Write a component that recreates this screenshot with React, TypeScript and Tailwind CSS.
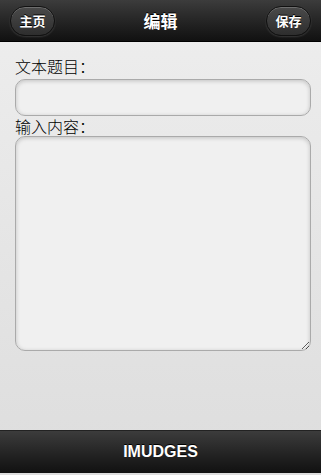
import React from "react"

function HeaderButton({ label }: { label: string }) {
  return (
    <button className="h-[30px] w-[45px] rounded-full border border-[#111] bg-gradient-to-b from-[#4a4a4a] to-[#2e2e2e] text-[13px] font-bold text-white shadow-[inset_0_1px_0_rgba(255,255,255,0.2),0_1px_2px_rgba(255,255,255,0.15)] [text-shadow:0_-1px_0_#000]">
      {label}
    </button>
  )
}

export default function App() {
  return (
    <div className="flex h-[475px] w-[321px] flex-col bg-gradient-to-b from-[#eeeeee] to-[#dddddd] font-['Noto_Sans_CJK_SC',sans-serif]">
      <header className="flex h-[42px] shrink-0 items-center justify-between border-b border-black bg-gradient-to-b from-[#3c3c3c] to-[#111111] px-[10px]">
        <HeaderButton label="主页" />
        <h1 className="text-[17px] font-bold text-white [text-shadow:0_-1px_0_#000]">编辑</h1>
        <HeaderButton label="保存" />
      </header>

      <main className="flex flex-1 flex-col px-[15px] pt-[13px]">
        <label className="text-[16px] font-light leading-[22px] text-black">文本题目：</label>
        <input className="mt-[2px] h-[37px] w-[296px] rounded-[10px] border border-[#aaa] bg-[#f0f0f0] px-2 shadow-[inset_0_1px_4px_rgba(0,0,0,0.2)] outline-none" />
        <label className="text-[16px] font-light leading-[20px] text-black">输入内容：</label>
        <textarea className="h-[215px] w-[296px] rounded-[10px] border border-[#aaa] bg-[#f0f0f0] p-2 shadow-[inset_0_1px_4px_rgba(0,0,0,0.2)] outline-none" />
      </main>

      <footer className="mb-[2px] flex h-[43px] shrink-0 items-center justify-center border-t border-[#222] bg-gradient-to-b from-[#3c3c3c] to-[#111111]">
        <span className="font-['Liberation_Sans',sans-serif] text-[16px] font-bold text-white [text-shadow:0_-1px_0_#000]">IMUDGES</span>
      </footer>
    </div>
  )
}
